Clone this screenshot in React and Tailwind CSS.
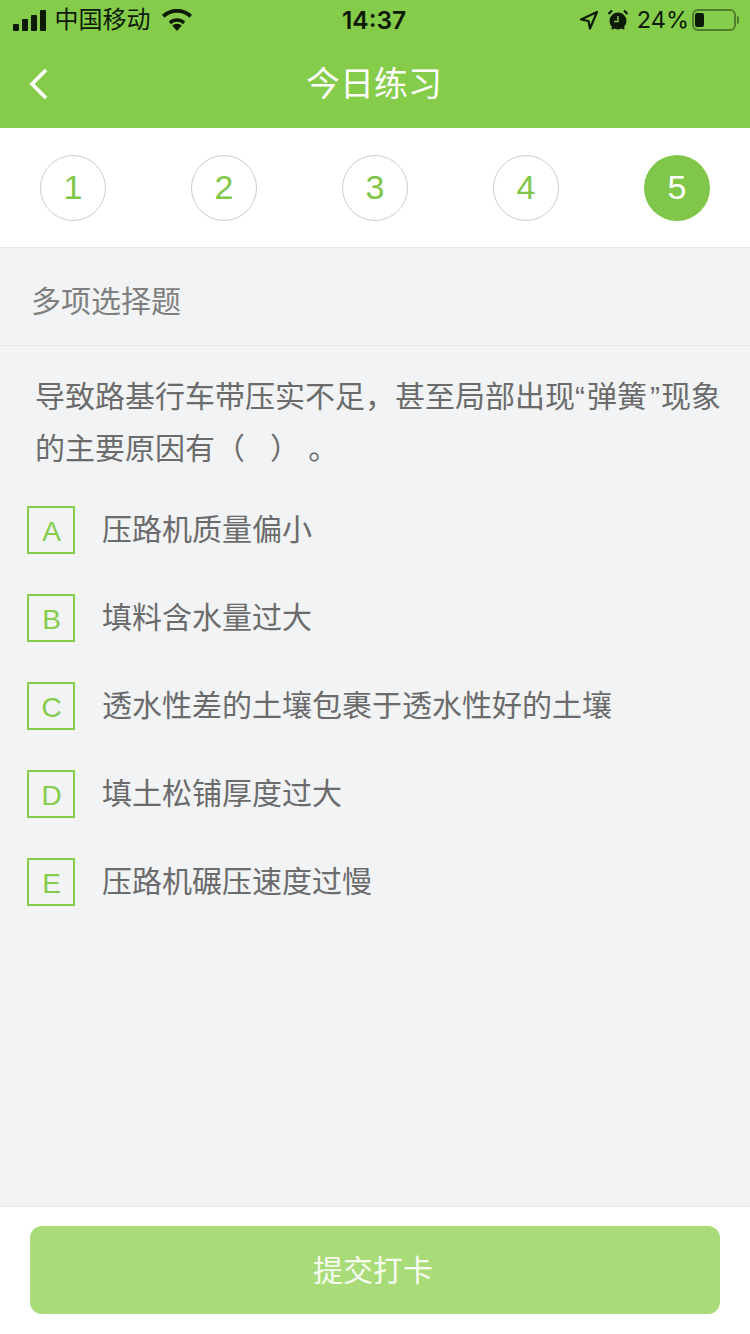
const steps = ["1", "2", "3", "4", "5"];
const options = [
  ["A", "压路机质量偏小"],
  ["B", "填料含水量过大"],
  ["C", "透水性差的土壤包裹于透水性好的土壤"],
  ["D", "填土松铺厚度过大"],
  ["E", "压路机碾压速度过慢"],
];

function StatusBar() {
  return (
    <div className="h-10 flex items-center justify-between text-[#0c1a06] relative">
      <div className="flex items-center pl-[13px]">
        <div className="flex items-end gap-[3.5px] h-[21px]">
          <span className="w-[5.5px] h-[7px] bg-[#0c1a06] rounded-[1px]" />
          <span className="w-[5.5px] h-[12px] bg-[#0c1a06] rounded-[1px]" />
          <span className="w-[5.5px] h-[16px] bg-[#0c1a06] rounded-[1px]" />
          <span className="w-[5.5px] h-[21px] bg-[#0c1a06] rounded-[1px]" />
        </div>
        <span className="ml-[9px] text-[24px] leading-none">中国移动</span>
        <svg className="ml-[11px]" width="30" height="22" viewBox="0 0 30 22">
          <path d="M15 22l-4.8-5.4a7 7 0 0 1 9.6 0z" fill="#0c1a06" />
          <path d="M6.8 12.6a12 12 0 0 1 16.4 0l-2.2 2.6a8.6 8.6 0 0 0-12 0z" fill="#0c1a06" />
          <path d="M0 5.8a22 22 0 0 1 30 0l-2.6 3a18 18 0 0 0-24.8 0z" fill="#0c1a06" />
        </svg>
      </div>
      <span className="absolute left-[342px] top-[6px] text-[24.5px] leading-[28px] font-semibold font-['Inter',sans-serif]">14:37</span>
      <div className="flex items-center pr-[11px]">
        <svg width="20" height="20" viewBox="0 0 20 20" fill="none" stroke="#0c1a06" strokeWidth="2.2" strokeLinejoin="round">
          <path d="M18 2 2 9.5l7.5 1.5 1.5 7.5z" />
        </svg>
        <svg className="ml-[8px]" width="22" height="22" viewBox="0 0 22 22">
          <circle cx="11" cy="12" r="8.5" fill="#0c1a06" />
          <path d="M1.5 5 5 1.5M20.5 5 17 1.5M5 20l1.5-2M17 20l-1.5-2" stroke="#0c1a06" strokeWidth="2.2" />
          <path d="M11 7v5.5H7" stroke="#85cc4b" strokeWidth="1.4" fill="none" />
        </svg>
        <span className="ml-[8px] text-[23.5px] leading-none font-['Inter',sans-serif]">24%</span>
        <div className="ml-[3px] w-[44px] h-[22px] rounded-[6px] border-2 border-[#4f7f2c] py-[2px] pl-[1px] flex">
          <span className="w-[9px] bg-[#0c1a06] rounded-[2px]" />
        </div>
        <span className="ml-[1px] w-[2px] h-[8px] rounded-r bg-[#4f7f2c]" />
      </div>
    </div>
  );
}

export default function App() {
  return (
    <div className="w-[750px] h-[1334px] flex flex-col bg-[#f1f3f5] font-['Liberation_Sans','Noto_Sans_CJK_SC',sans-serif]">
      <header className="h-32 bg-[#85cc4b] shrink-0">
        <StatusBar />
        <div className="h-[88px] relative flex items-center justify-center pr-[2px]">
          {/* back arrow */}
          <svg className="absolute left-[28px] top-[27px]" width="22" height="34" viewBox="0 0 22 34" fill="none" stroke="#ffffff" strokeWidth="3.6">
            <path d="M18 3 4 17l14 14" />
          </svg>
          <h1 className="text-[34px] leading-none text-white font-normal">今日练习</h1>
        </div>
      </header>

      <div className="h-[120px] bg-white border-b border-[#e6e6e6] flex items-center justify-between px-10 shrink-0">
        {steps.map((n, i) =>
          i === 4 ? (
            <div key={n} className="w-[66px] h-[66px] rounded-full bg-[#80c64a] text-white text-[34px] flex items-center justify-center">
              {n}
            </div>
          ) : (
            <div key={n} className="w-[66px] h-[66px] rounded-full border border-[#cccccc] text-[#80c64a] text-[34px] flex items-center justify-center">
              {n}
            </div>
          )
        )}
      </div>

      <div className="h-[98px] border-b border-[#e6e8ea] flex items-center pl-[31px] pt-[9px] text-[30px] text-[#7f7f7f] shrink-0">
        多项选择题
      </div>

      <p className="mt-[25px] pl-[35px] pr-[20px] text-[30px] leading-[52px] text-[#6b6b6b]">
        导致路基行车带压实不足，甚至局部出现<span className="tracking-[2px]">“</span>弹簧<span className="ml-[3px] tracking-[1px]">”</span>现象的主要原因有（&nbsp;&nbsp;&nbsp;）&nbsp;。
      </p>

      <div className="mt-[31px] pl-[27px] flex flex-col gap-10 flex-1">
        {options.map(([key, text]) => (
          <div key={key} className="flex items-center h-12">
            <div className="w-12 h-12 border-2 border-[#85cc4b] text-[#85cc4b] text-[28px] pt-[3px] pl-[1px] flex items-center justify-center shrink-0">
              {key}
            </div>
            <span className="ml-[27px] text-[30px] leading-none text-[#6b6b6b]">{text}</span>
          </div>
        ))}
      </div>

      <footer className="h-32 bg-white border-t border-[#e6e8ea] px-[30px] pt-[19px] shrink-0">
        <button className="w-full h-[88px] rounded-xl bg-[#a9dc78] text-white/90 text-[30px] pr-1">提交打卡</button>
      </footer>
    </div>
  );
}
